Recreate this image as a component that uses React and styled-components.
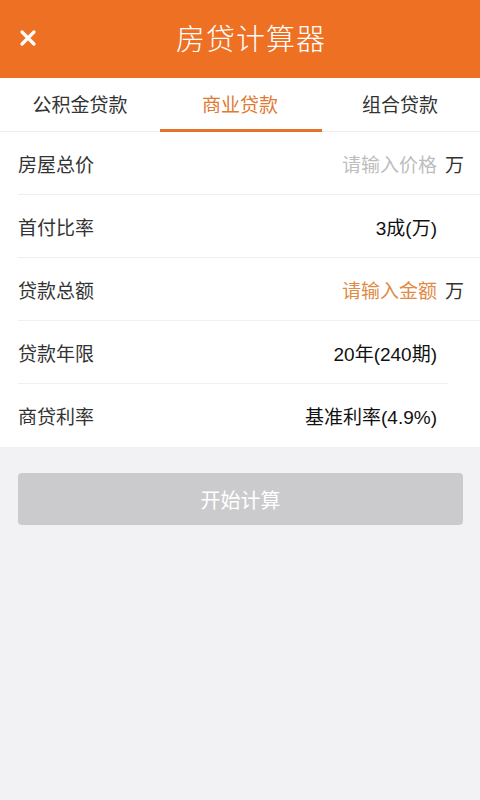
import styled, {createGlobalStyle} from "styled-components";
import {useState} from "react";

const GlobalStyle = createGlobalStyle`
  html, body {
    margin: 0;
    padding: 0;
    background: #f2f2f4;
    font-family: "Liberation Sans", "Noto Sans CJK SC", sans-serif;
  }
`

const Page = styled.div`
  min-height: 800px;
  background: #f2f2f4;
`

const Header = styled.header`
  height: 78px;
  background: #ee7023;
  display: flex;
  align-items: center;
  justify-content: center;
  position: relative;
  box-sizing: border-box;
  padding: 0 0 5px 22px;

  h1 {
    margin: 0;
    font-size: 29px;
    font-weight: 300;
    color: #fff;
    letter-spacing: 1px;
  }
`

const CloseBtn = styled.button`
  position: absolute;
  left: 14px;
  top: 24px;
  width: 28px;
  height: 28px;
  padding: 0;
  border: 0;
  background: none;
  display: flex;
  align-items: center;
  justify-content: center;
`

const Tabs = styled.nav`
  display: grid;
  grid-template-columns: repeat(3, 1fr);
  background: #fff;
  height: 53px;
  border-bottom: 1px solid #ececec;
`

const Tab = styled.button`
  border: 0;
  background: none;
  padding: 0 0 2px;
  position: relative;
  font-family: inherit;
  font-size: 19px;
  color: ${p => p.$active ? '#e07a33' : '#333'};

  &::after {
    content: '';
    display: ${p => p.$active ? 'block' : 'none'};
    position: absolute;
    left: 0;
    right: -2px;
    bottom: -1px;
    height: 3px;
    background: #e8722c;
  }
`

const Form = styled.div`
  background: #fff;
  padding-left: 18px;
`

const Row = styled.div`
  height: 63px;
  display: flex;
  align-items: center;
  border-bottom: ${p => p.$last ? 'none' : '1px solid #efefef'};
  margin-right: ${p => p.$short ? '32px' : '0'};
  box-sizing: border-box;
`

const Label = styled.span`
  flex: 1;
  font-size: 19px;
  color: #333;
`

const Value = styled.span`
  font-size: 19px;
  color: ${p => p.$tone === 'hint' ? '#bdbdbd' : p.$tone === 'accent' ? '#e08a45' : '#111'};
  margin-right: ${p => p.$unit ? '0' : p.$short ? '11px' : '43px'};
`

const Unit = styled.span`
  width: 18px;
  margin-left: 8px;
  margin-right: 17px;
  font-size: 19px;
  color: #333;
`

const Actions = styled.div`
  padding: 26px 17px 0 18px;
`

const CalcBtn = styled.button`
  width: 100%;
  height: 52px;
  border: 0;
  border-radius: 4px;
  background: #cbcbcd;
  color: #fff;
  font-family: inherit;
  font-size: 20px;
`

const tabs = ['公积金贷款', '商业贷款', '组合贷款']

const rows = [
    {label: '房屋总价', value: '请输入价格', tone: 'hint', unit: '万'},
    {label: '首付比率', value: '3成(万)'},
    {label: '贷款总额', value: '请输入金额', tone: 'accent', unit: '万'},
    {label: '贷款年限', value: '20年(240期)', short: true},
    {label: '商贷利率', value: '基准利率(4.9%)'},
]

const App = () => {
    const [active, setActive] = useState(1)

    return (
        <Page>
            <GlobalStyle/>
            <Header>
                <CloseBtn type='button' aria-label='close'>
                    <svg width='18' height='18' viewBox='0 0 18 18'>
                        <path d='M3 3 L15 15 M15 3 L3 15' stroke='#fff' strokeWidth='3.2' strokeLinecap='round'/>
                    </svg>
                </CloseBtn>
                <h1>房贷计算器</h1>
            </Header>
            <Tabs>
                {tabs.map((t, i) => (
                    <Tab key={t} type='button' $active={i === active} onClick={() => setActive(i)}>{t}</Tab>
                ))}
            </Tabs>
            <Form>
                {rows.map((r, i) => (
                    <Row key={r.label} $last={i === rows.length - 1} $short={r.short}>
                        <Label>{r.label}</Label>
                        <Value $tone={r.tone} $short={r.short} $unit={!!r.unit}>{r.value}</Value>
                        {r.unit && <Unit>{r.unit}</Unit>}
                    </Row>
                ))}
            </Form>
            <Actions>
                <CalcBtn type='button'>开始计算</CalcBtn>
            </Actions>
        </Page>
    )
}

export default App;
